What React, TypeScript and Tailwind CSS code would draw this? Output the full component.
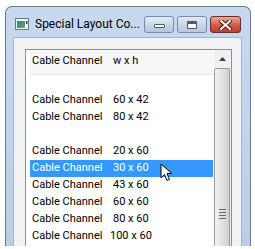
const rows: { name: string; size: string; selected?: boolean; wide?: boolean }[] = [
  { name: "", size: "" },
  { name: "Cable Channel", size: "60 x 42" },
  { name: "Cable Channel", size: "80 x 42" },
  { name: "", size: "" },
  { name: "Cable Channel", size: "20 x 60" },
  { name: "Cable Channel", size: "30 x 60", selected: true },
  { name: "Cable Channel", size: "43 x 60" },
  { name: "Cable Channel", size: "60 x 60" },
  { name: "Cable Channel", size: "80 x 60" },
  { name: "Cable Channel", size: "100 x 60", wide: true },
];

function AppIcon() {
  return (
    <svg width="15" height="13" viewBox="0 0 15 13">
      <rect x="0.5" y="0.5" width="13" height="11" fill="#f4f6f8" stroke="#6b7686" />
      <defs>
        <linearGradient id="ig" x1="0" y1="0" x2="1" y2="1">
          <stop offset="0" stopColor="#2f7fa8" />
          <stop offset="0.6" stopColor="#4f9a6a" />
          <stop offset="1" stopColor="#7aa84a" />
        </linearGradient>
      </defs>
      <rect x="2" y="3" width="8" height="7" fill="url(#ig)" />
      <rect x="11" y="3" width="1.5" height="3" fill="#3a4a5a" />
    </svg>
  );
}

function CaptionButton({ kind }: { kind: "min" | "max" | "close" }) {
  if (kind === "close") {
    return (
      <div className="w-[31px] h-[17px] rounded-[3px] border border-[#6b2a22] bg-gradient-to-b from-[#e8a99c] via-[#d0604e] to-[#c23d2a] flex items-center justify-center">
        <svg width="13" height="10" viewBox="0 0 13 10">
          <path d="M2 1 L11 9 M11 1 L2 9" stroke="#4a1c16" strokeWidth="4" strokeLinecap="square" />
          <path d="M2 1 L11 9 M11 1 L2 9" stroke="#ffffff" strokeWidth="2" strokeLinecap="square" />
        </svg>
      </div>
    );
  }
  return (
    <div className="w-[30px] h-[17px] rounded-[3px] border border-[#7b8ba0] bg-gradient-to-b from-[#e3ecf6] via-[#c9d8ea] to-[#b3c8e0] flex items-center justify-center">
      {kind === "min" ? (
        <div className="w-[11px] h-[4px] mt-[3px] bg-white border border-[#4e5a68] rounded-[1px]" />
      ) : (
        <div className="w-[10px] h-[8px] bg-[#f8fbff] border border-[#4e5a68] border-t-[3px] rounded-[1px]" />
      )}
    </div>
  );
}

export default function App() {
  return (
    <div className="w-[255px] h-[249px] bg-white overflow-hidden font-[Roboto,sans-serif]">
      <div className="ml-[5px] mt-[6px] w-[246px] h-[240px] rounded-t-[7px] border border-b-0 border-[#6a7a8c] bg-gradient-to-b from-[#c7d9ee] to-[#b9cfe8] pl-[7px] pr-[8px] flex flex-col overflow-hidden">
        <div className="h-[30px] flex items-start shrink-0">
          <div className="mt-[11px] ml-[2px]">
            <AppIcon />
          </div>
          <div className="mt-[9px] ml-[5px] text-[12px] text-black leading-[17px]">Special Layout Co...</div>
          <div className="ml-auto mt-[9px] mr-[1px] flex gap-[3px]">
            <CaptionButton kind="min" />
            <CaptionButton kind="max" />
            <CaptionButton kind="close" />
          </div>
        </div>
        <div className="flex-1 border border-b-0 border-[#a3b6cc] bg-[#f2f2f2] pt-[11px] pl-[11px] pr-[9px] flex">
          <div className="flex-1 border border-b-0 border-[#8a9099] bg-white flex">
            <div className="flex-1 flex flex-col pl-[4px] pr-[1px] text-[11px] text-black">
              <div className="h-[25px] pb-[1px] flex items-center bg-[#f7f7f7] border-b border-[#e6e6e6] px-[2px]">
                <span className="w-[81px]">Cable Channel</span>
                <span>w x h</span>
              </div>
              {rows.map((r, i) => (
                <div
                  key={i}
                  className={
                    r.selected
                      ? "h-[17px] shrink-0 flex items-center px-[2px] bg-[#3399ff] text-white"
                      : "h-[17px] shrink-0 flex items-center px-[2px]"
                  }
                >
                  <span className="w-[81px]">{r.name}</span>
                  <span className={r.wide ? "-ml-[3px]" : ""}>{r.size}</span>
                  {r.selected && (
                    <svg className="ml-[11px] mt-[9px]" width="13" height="20" viewBox="0 0 13 20">
                      <path d="M1 1 L1 15 L4.5 11.5 L7 17.5 L9.5 16.5 L7 10.5 L12 10.5 Z" fill="#ffffff" stroke="#000000" strokeWidth="1" strokeLinejoin="round" />
                    </svg>
                  )}
                </div>
              ))}
            </div>
            <div className="w-[17px] bg-[#f0f0f0] flex flex-col">
              <div className="h-[18px] flex items-center justify-center">
                <svg width="7" height="4" viewBox="0 0 7 4">
                  <path d="M0 4 L3.5 0 L7 4 Z" fill="#3c3c3c" />
                </svg>
              </div>
              <div className="flex-1 mr-[1px] rounded-t-[2px] border border-b-0 border-[#9a9a9a] bg-gradient-to-r from-[#f2f2f2] via-[#e2e2e2] to-[#cfcfcf] flex flex-col items-center">
                <div className="mt-[140px] flex flex-col gap-[2px]">
                  <div className="w-[7px] h-[1px] bg-[#6a6a6a]" />
                  <div className="w-[7px] h-[1px] bg-[#6a6a6a]" />
                  <div className="w-[7px] h-[1px] bg-[#6a6a6a]" />
                  <div className="w-[7px] h-[1px] bg-[#6a6a6a]" />
                </div>
              </div>
            </div>
          </div>
        </div>
      </div>
    </div>
  );
}
